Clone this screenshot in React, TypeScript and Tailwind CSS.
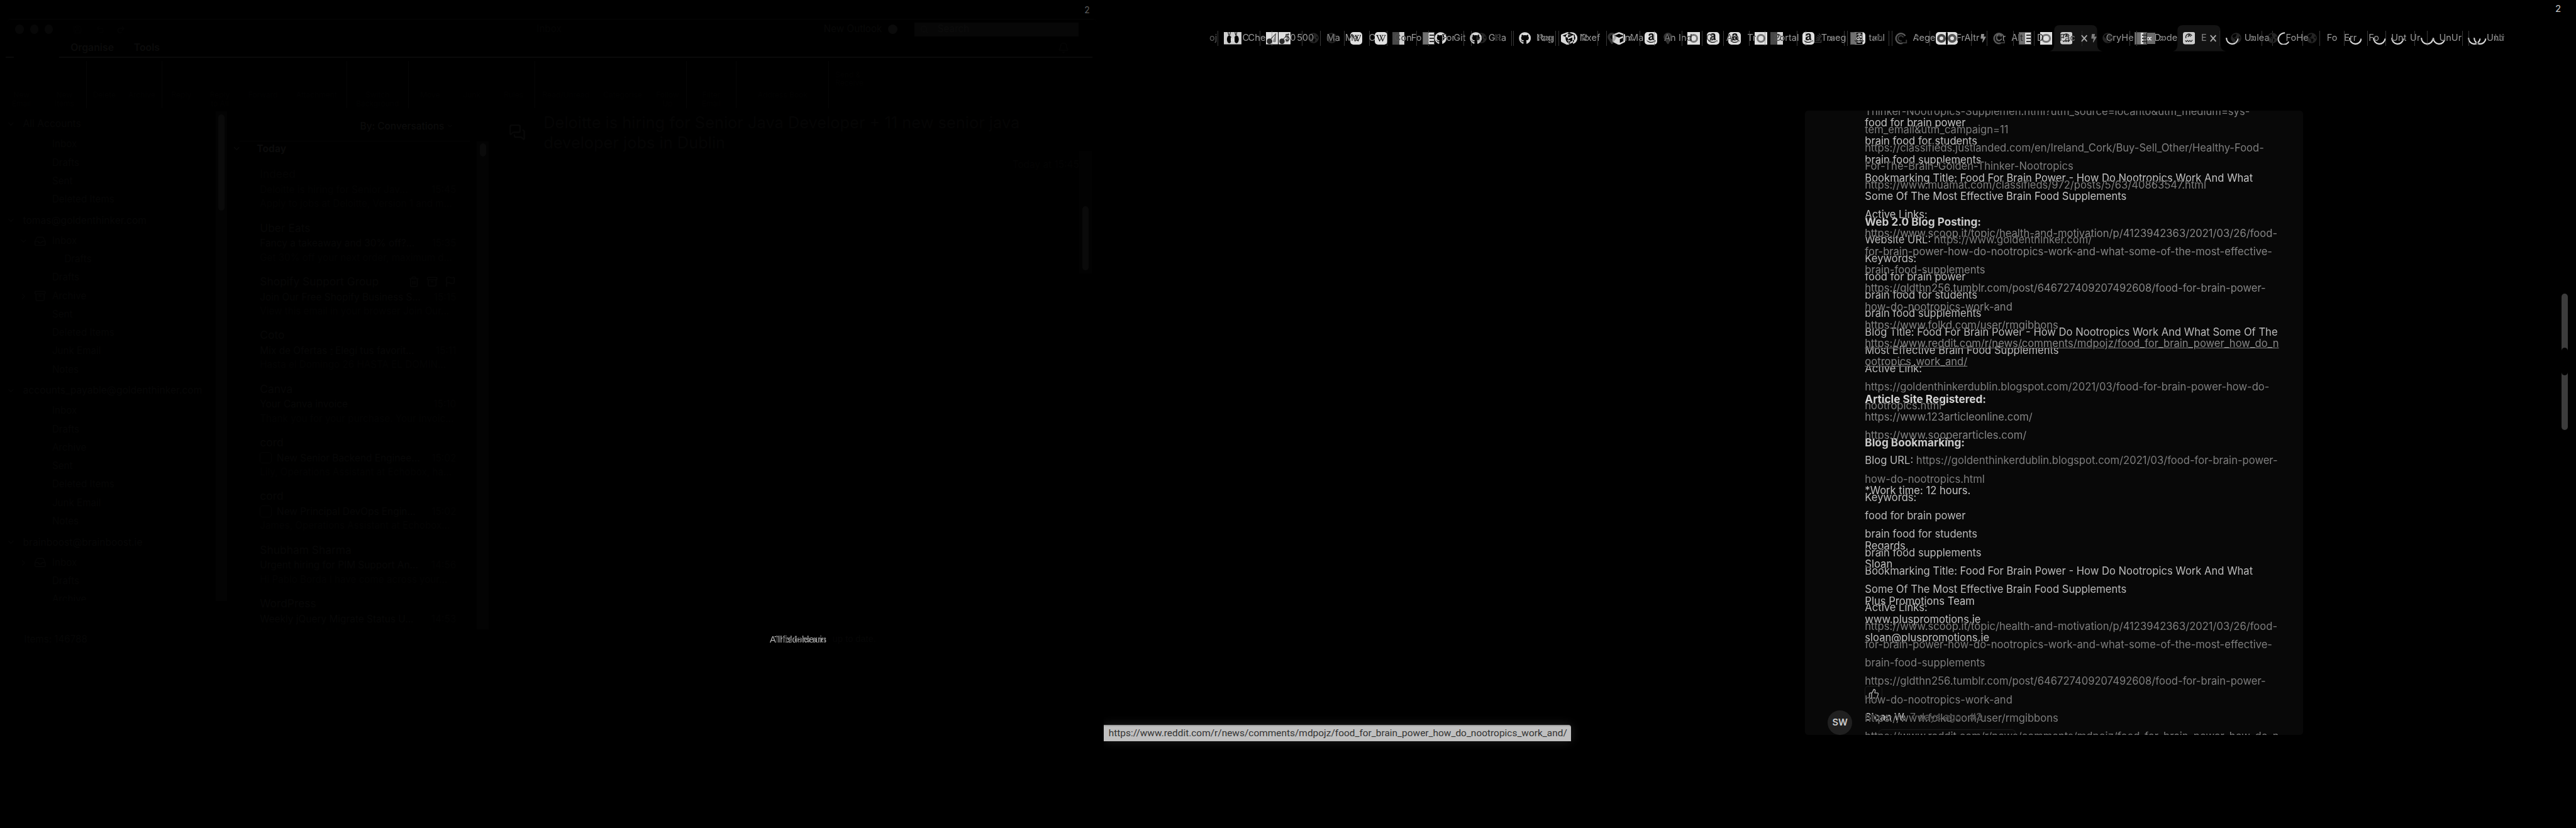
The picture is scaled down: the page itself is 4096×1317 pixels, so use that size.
import React from "react";
import { Archive, Bell, ChevronDown, ChevronRight, Flag, Inbox, MessagesSquare, Redo2, Save, Search, ThumbsUp, Trash2, Undo2 } from "lucide-react";
import { FaAmazon, FaBolt, FaCube, FaGithub, FaGlobeAmericas, FaMapMarkerAlt, FaStackOverflow, FaWikipediaW } from "react-icons/fa";

/* ---------- mail window ---------- */

type Folder = { label: string; kind?: "head" | "indent"; icon?: "inbox" | "archive"; open?: boolean };

const folders: Folder[] = [
  { label: "All Accounts", kind: "head" },
  { label: "Inbox" },
  { label: "Drafts" },
  { label: "Sent" },
  { label: "Deleted Items" },
  { label: "tomas@goldenthinker.com", kind: "head" },
  { label: "Inbox", icon: "inbox", open: true },
  { label: "Drafts", kind: "indent" },
  { label: "Drafts" },
  { label: "Archive", icon: "archive" },
  { label: "Sent" },
  { label: "Deleted Items" },
  { label: "Junk Email" },
  { label: "Notes" },
  { label: "accounts_payable@goldenthinker.com", kind: "head" },
  { label: "Inbox" },
  { label: "Drafts" },
  { label: "Archive" },
  { label: "Sent" },
  { label: "Deleted Items" },
  { label: "Junk Email" },
  { label: "Notes" },
  { label: "brainboost@brainboost.ie", kind: "head" },
  { label: "Inbox", icon: "inbox" },
  { label: "Drafts" },
  { label: "Archive" },
];

const messages = [
  { from: "Indeed", subject: "Deloitte is hiring for Senior Jav...", time: "15:45", preview: "Apply to jobs at Deloitte, Version 1 and m...", faint: true },
  { from: "Uber Eats", subject: "Fancy a takeaway and 30% off?...", time: "15:35", preview: "Get 30% off your next order, maximum d..." },
  { from: "Shopify Support Group", subject: "Join Our Free Shopify Business S...", time: "15:15", preview: "View this email in your browser Join Our...", tools: true },
  { from: "Coto", subject: "Mix de Ofertas 🕯 Elegí tus favorit...", time: "15:11", preview: "Hasta el Domingo 26 HASTA EL DOMIN..." },
  { from: "Canva", subject: "Your Canva invoice", time: "15:10", preview: "Thank you for your purchase. Your invoic..." },
  { from: "cord", subject: "New Senior Backend Enginee...", time: "15:02", preview: "Lily, Operations Assistant at Echobox, ha...", cord: true },
  { from: "cord", subject: "New Principal DevOps Engin...", time: "15:02", preview: "James, Operations Assistant at Echobox...", cord: true },
  { from: "Shubham Sharma", subject: "Urgent hiring for PIM Support An...", time: "14:56", preview: "Hi Pablo Borda I have come across your..." },
  { from: "WordPress", subject: "Weekly jQuery Migrate Status U...", time: "14:53", preview: "Howdy, readthis is a weekly update of..." },
];

function FolderRow({ f }: { f: Folder }) {
  if (f.kind === "head")
    return (
      <div className="flex h-60 shrink-0 items-center pl-16 text-[15.6px] text-[#070707]">
        <ChevronDown className="mr-20 size-24" />
        {f.label}
      </div>
    );
  return (
    <div className="flex h-48 shrink-0 items-center text-[15.2px] text-[#060606]">
      <div className={f.kind === "indent" ? "flex w-168 items-center pl-50" : "flex w-136 items-center pl-50"}>
        {f.icon && (f.open ? <ChevronDown className="mr-14 size-24" /> : <ChevronRight className="mr-14 size-24" />)}
        {f.icon === "inbox" && <Inbox className="size-32" />}
        {f.icon === "archive" && <Archive className="size-32" />}
      </div>
      {f.label}
    </div>
  );
}

function RibbonGroup({ className, labels }: { className: string; labels: string[] }) {
  return (
    <div className={`flex h-124 shrink-0 items-end justify-around border-r-[1px] border-[#060606] text-center text-[12px] leading-22 text-[#030303] ${className}`}>
      {labels.map((l) => (
        <div key={l} className="h-46 whitespace-pre-line">{l}</div>
      ))}
    </div>
  );
}

function MailWindow() {
  return (
    <div className="flex h-2160 w-2880 flex-col overflow-hidden">
      <div className="flex h-50 items-center justify-end pr-37 text-[14px] text-[#5c5c5c]">2</div>
      <div className="mx-18 flex h-52 items-center rounded-t-md border-t border-[#050505] text-[15.2px] text-[#080808]">
        <div className="flex w-310 gap-16 pl-22">
          <div className="size-24 rounded-full bg-[#070707]" />
          <div className="size-24 rounded-full bg-[#070707]" />
          <div className="size-24 rounded-full bg-[#070707]" />
          <Save className="ml-36 size-26 text-[#030303]" />
          <Undo2 className="ml-20 size-26 text-[#030303]" />
          <Redo2 className="ml-14 size-26 text-[#060606]" />
        </div>
        <div className="w-1821 pl-1072 text-[#050505]">Inbox</div>
        <div className="flex w-237 items-center gap-16 whitespace-nowrap">
          New Outlook
          <div className="size-24 rounded-full bg-[#0a0a0a]" />
        </div>
        <div className="flex h-36 w-427 items-center gap-24 bg-[#070707] pl-14 text-[#0c0c0c]">
          <Search className="size-22" />
          Search
        </div>
      </div>
      <div className="flex h-46 items-center pl-184 text-[15.8px] font-semibold text-[#0b0b0b]">
        <div className="w-165">Organise</div>
        <div className="grow">Tools</div>
        <Bell className="mr-90 size-30 text-[#050505]" />
      </div>
      <div className="flex h-3 gap-118 pl-14">
        <div className="w-22 bg-[#0a0a0a]" />
        <div className="mr-30 grow bg-[#0a0a0a]" />
      </div>
      <div className="flex h-140 items-center">
        <RibbonGroup className="w-226" labels={["New\nEmail", "New\nItems"]} />
        <RibbonGroup className="w-197" labels={["Delete", "Archive"]} />
        <RibbonGroup className="w-482" labels={["Reply", "Reply\nto All", "Forward", "Attachment"]} />
        <RibbonGroup className="w-161" labels={["Switch\nBackground"]} />
        <RibbonGroup className="w-331" labels={["Move", "Junk", "Rules"]} />
        <RibbonGroup className="w-394" labels={["Read/Unread", "Categorise", "Follow\nUp"]} />
        <RibbonGroup className="w-131" labels={["Filter\nEmail"]} />
        <RibbonGroup className="w-241" labels={["Address Book"]} />
        <div className="h-76 pl-16 text-[12px] leading-22 text-[#030303]">Send &amp;<br />Receive</div>
      </div>
      <div className="flex h-1352">
        <div className="flex h-1278 w-562 shrink-0 flex-col overflow-hidden pt-2">
          {folders.map((f, i) => <FolderRow key={i} f={f} />)}
        </div>
        <div className="h-1278 w-30 shrink-0 bg-[#030303] pt-7">
          <div className="mx-auto h-252 w-16 rounded-full bg-[#0a0a0a]" />
        </div>
        <div className="flex w-652 shrink-0 flex-col overflow-hidden pl-14">
          <div className="ml-19 flex h-79 w-600 shrink-0 items-center justify-end gap-6 border-b border-[#050505] pr-42 text-[15.4px] font-medium text-[#0b0b0b]">
            By: Conversations <ChevronDown className="size-18" />
          </div>
          <div className="flex h-36 shrink-0 items-center text-[15.6px] font-bold text-[#0b0b0b]">
            <ChevronDown className="mr-40 size-24" /> Today
          </div>
          {messages.map((m, i) => (
            <div key={i} className={m.faint ? "mr-54 flex h-140 w-512 shrink-0 flex-col self-end pt-28 text-[#040404]" : "mr-54 flex h-140 w-512 shrink-0 flex-col self-end pt-28 text-[#070707]"}>
              <div className="flex h-42 items-center text-[17.4px]">
                <span className="grow">{m.from}</span>
                {m.tools && <span className="flex gap-18"><Trash2 className="size-30" /><Archive className="size-30" /><Flag className="size-30" /></span>}
              </div>
              <div className="flex h-38 items-center whitespace-nowrap text-[15.4px]">
                {m.cord && <span className="mr-14 h-30 w-30 rounded-sm border border-[#050505]" />}
                <span className="grow">{m.subject}</span>
                <span className="text-[#040404]">{m.time}</span>
              </div>
              <div className="h-32 whitespace-nowrap text-[15.2px] text-[#040404]">{m.preview}</div>
            </div>
          ))}
        </div>
        <div className="mt-78 w-31 shrink-0 bg-[#030303] pt-5">
          <div className="mx-auto h-35 w-16 rounded-full bg-[#0a0a0a]" />
        </div>
        <div className="flex w-1573 shrink-0 pl-52 pt-3">
          <MessagesSquare className="mt-29 size-44 shrink-0 text-[#080808]" />
          <div className="ml-47 w-1397 shrink-0 text-[25.4px] leading-52 text-[#050505]">
            <div className="whitespace-nowrap">Deloitte is hiring for Senior Java Developer + 11 new senior java</div>
            <div>developer jobs in Dublin</div>
            <div className="mt-8 text-right text-[15.4px] leading-48 text-[#040404]">Today at 15:45</div>
          </div>
          <div className="mt-100 h-320 w-33 shrink-0 bg-[#020202] pt-144">
            <div className="mx-auto h-167 w-16 rounded-full bg-[#0a0a0a]" />
          </div>
        </div>
      </div>
      <div className="flex h-52 items-center whitespace-nowrap pl-63 text-[15.2px] text-[#060606]">
        <div className="w-1945">Items: 146788</div>
        <div className="relative isolate h-48 w-154 overflow-hidden font-['Liberation_Sans'] text-[14.6px] leading-48 text-[#b4b4b4]">
          <div>All folders are up to date.</div>
          <div className="absolute left-12 top-0 mix-blend-difference">This folder is up to date.</div>
        </div>
        <div className="pl-10 font-['Liberation_Sans'] text-[14.6px] text-[#060606]">up to date.</div>
      </div>
    </div>
  );
}

/* ---------- browser tab strip ---------- */

type Kind =
  | "sep" | "txt" | "dim" | "butterfly" | "cherry" | "globe" | "wiki" | "half" | "sheet" | "github"
  | "cube" | "amazon" | "pin" | "ring" | "stack" | "swirl" | "rings" | "bolt" | "tab" | "photo"
  | "alpha" | "arc" | "arcLeft" | "close";

const strip: [Kind, number, string?][] = [
  ["tab", 5346], ["tab", 5668],
  ["dim", 3155, "oj"], ["sep", 3177], ["butterfly", 3192], ["txt", 3241, "C"], ["txt", 3256, "Che"], ["sep", 3287],
  ["cherry", 3302], ["sep", 3318], ["cherry", 3335], ["txt", 3351, "50"], ["txt", 3383, "500"], ["sep", 3396],
  ["globe", 3412], ["sep", 3444], ["globe", 3460], ["txt", 3461, "Ma"], ["sep", 3506], ["txt", 3509, "Ma"], ["wiki", 3522],
  ["sep", 3571], ["txt", 3571, "C"], ["wiki", 3587], ["sep", 3617], ["half", 3632], ["txt", 3637, "Con"], ["txt", 3681, "Fo"],
  ["sep", 3694], ["sheet", 3711], ["sep", 3726], ["github", 3742], ["txt", 3760, "For"], ["txt", 3792, "Git"], ["sep", 3818],
  ["globe", 3850], ["github", 3834], ["sep", 3837], ["txt", 3883, "GRa"], ["txt", 3900, "R"], ["sep", 3943], ["sep", 3948],
  ["github", 3962], ["txt", 4008, "Pag"], ["txt", 4011, "Reg"], ["sep", 4057], ["sep", 4066], ["cube", 4072], ["github", 4083],
  ["txt", 4121, "Nxef"], ["txt", 4126, "R"], ["sep", 4167], ["sep", 4190], ["pin", 4190], ["cube", 4206], ["txt", 4232, "InMa"], ["txt", 4249, "o"],
  ["sep", 4277], ["amazon", 4291], ["sep", 4315], ["pin", 4336], ["txt", 4341, "An"], ["sep", 4387], ["txt", 4379, "Ind"],
  ["ring", 4402], ["sep", 4439], ["amazon", 4453], ["txt", 4451, "G"], ["sep", 4495], ["txt", 4503, "A"], ["amazon", 4509], ["txt", 4516, "m"],
  ["txt", 4558, "Tr"], ["sep", 4563], ["ring", 4578], ["sep", 4603], ["half", 4619], ["txt", 4627, "Portal"], ["txt", 4629, "C"],
  ["sep", 4687], ["sep", 4711], ["amazon", 4702], ["stack", 4729], ["txt", 4751, "Traeg"], ["txt", 4770, "x"], ["sep", 4811], ["sep", 4819],
  ["sheet", 4827], ["amazon", 4834], ["txt", 4875, "tabl"], ["txt", 4884, "ch"], ["sep", 4926], ["sep", 4935], ["swirl", 4944],
  ["txt", 4990, "Aege"], ["txt", 4998, "t"], ["sep", 5034], ["rings", 5050], ["txt", 5103, "FrAltr"], ["sep", 5142], ["bolt", 5165],
  ["sep", 5183], ["swirl", 5199], ["txt", 5206, "Cr"], ["txt", 5247, "Alt"], ["sep", 5251], ["sheet", 5267], ["sep", 5306],
  ["txt", 5314, "D"], ["ring", 5322], ["photo", 5374], ["txt", 5373, "Fac"], ["sep", 5431], ["close", 5427], ["bolt", 5453],
  ["globe", 5485], ["txt", 5494, "CryHe"], ["sep", 5555], ["sep", 5574], ["sheet", 5569], ["alpha", 5592], ["txt", 5620, "Dode"], ["txt", 5634, "x"],
  ["photo", 5694], ["txt", 5742, "E"], ["close", 5763], ["sep", 5790], ["arc", 5806], ["globe", 5820], ["txt", 5855, "Unlea"], ["txt", 5870, "x"],
  ["sep", 5899], ["globe", 5915], ["sep", 5927], ["arcLeft", 5941], ["txt", 5963, "FoHe"], ["globe", 6016], ["sep", 6007], ["sep", 6050],
  ["txt", 6070, "Fo"], ["sep", 6114], ["txt", 6115, "Err"], ["arc", 6127], ["sep", 6175], ["txt", 6179, "Fo"], ["arc", 6190],
  ["sep", 6223], ["arc", 6238], ["txt", 6238, "Unt"], ["txt", 6287, "Ur"], ["sep", 6299], ["arc", 6314], ["sep", 6332], ["arc", 6346],
  ["txt", 6363, "UnUr"], ["sep", 6423], ["sep", 6439], ["arc", 6438], ["arc", 6453], ["txt", 6487, "Unti"], ["dim", 6507, "Ur"],
];

function Glyph({ kind, text }: { kind: Kind; text?: string }) {
  switch (kind) {
    case "sep":
      return <div className="h-40 w-[1px] bg-[#383838]" />;
    case "txt":
      return <span className="text-[14.6px] text-[#989898]">{text}</span>;
    case "dim":
      return <span className="text-[14.6px] text-[#5c5c5c]">{text}</span>;
    case "close":
      return (
        <svg viewBox="0 0 20 20" className="size-20">
          <path d="M3 2L17 18M17 2L3 18" stroke="#c0c0c0" strokeWidth="3" />
        </svg>
      );
    case "github":
      return <FaGithub className="size-32 text-[#d8d8d8]" />;
    case "globe":
      return <FaGlobeAmericas className="size-28 text-[#242424]" />;
    case "bolt":
      return <FaBolt className="h-22 w-18 text-[#909090]" />;
    case "cube":
      return <FaCube className="size-34 text-[#d8d8d8]" />;
    case "pin":
      return <FaMapMarkerAlt className="size-30 text-[#333333]" />;
    case "stack":
      return <FaStackOverflow className="size-28 text-[#3a3a3a]" />;
    case "wiki":
      return <div className="flex size-32 items-center justify-center rounded-[5px] bg-[#e0e0e0] text-black"><FaWikipediaW className="size-26" /></div>;
    case "amazon":
      return <div className="flex size-32 items-center justify-center rounded-[5px] bg-[#e0e0e0] text-[#111111]"><FaAmazon className="size-28" /></div>;
    case "ring":
      return <div className="flex size-32 items-center justify-center bg-[#e0e0e0]"><div className="size-24 rounded-full border-[3px] border-[#777777]" /></div>;
    case "rings":
      return (
        <div className="flex h-32 w-57 items-center justify-center rounded-[5px] bg-[#e0e0e0]">
          <div className="size-24 rounded-full border-[4px] border-[#444444]" />
          <div className="h-32 w-4 rounded-full bg-black" />
          <div className="size-24 rounded-full border-[4px] border-[#555555]" />
        </div>
      );
    case "half":
      return <div className="flex size-32 bg-[#474747]"><div className="ml-auto h-full w-14 bg-[#d0d0d0]" /></div>;
    case "sheet":
      return (
        <div className="flex size-32 border border-[#555555] bg-[#707070]">
          <div className="ml-auto flex h-full w-15 flex-col justify-evenly bg-[#d8d8d8] pl-3">
            <div className="h-3 bg-[#333333]" /><div className="h-3 bg-[#333333]" /><div className="h-3 bg-[#333333]" />
          </div>
        </div>
      );
    case "alpha":
      return <div className="flex size-30 items-center justify-center bg-[#6a6a6a] text-[15px] text-white">∝</div>;
    case "photo":
      return (
        <svg viewBox="0 0 32 32" className="size-32">
          <rect width="32" height="32" rx="6" fill="#e0e0e0" />
          <path d="M6 22l3 3 3-3 3 3 3-3 3 3 4-4" stroke="#333" strokeWidth="2" fill="none" />
          <path d="M8 16a8 8 0 0 1 15-6M13 13l3-6 4 5" stroke="#333" strokeWidth="2.4" fill="none" />
        </svg>
      );
    case "butterfly":
      return (
        <svg viewBox="0 0 47 32" className="h-32 w-47">
          <rect width="47" height="32" fill="#cfcfcf" />
          <path d="M11 0l2 9M17 0l-2 9M29 0l2 9M34 0l-2 9" stroke="#222" strokeWidth="2" />
          <ellipse cx="14" cy="19" rx="6" ry="10" fill="#000" />
          <ellipse cx="33" cy="19" rx="6" ry="10" fill="#000" />
          <path d="M18 14l5 4 5-4v12l-5-5-5 5z" fill="#ddd" />
        </svg>
      );
    case "cherry":
      return (
        <svg viewBox="0 0 32 32" className="size-32">
          <rect width="32" height="32" fill="#e0e0e0" />
          <path d="M9 22L26 4l-6 20" stroke="#555" strokeWidth="2" fill="none" />
          <circle cx="9" cy="24" r="7" fill="#2a2a2a" />
          <path d="M20 18l6-13v20a6 6 0 0 1-8 0z" fill="#888" />
        </svg>
      );
    case "swirl":
      return (
        <svg viewBox="0 0 32 32" className="size-32" fill="none">
          <path d="M27 10A13 13 0 1 0 20 29" stroke="#5a5a5a" strokeWidth="4" />
          <path d="M22 14a7 7 0 1 0-4 9M16 28h14v-8" stroke="#3c3c3c" strokeWidth="3" />
        </svg>
      );
    case "arc":
      return (
        <svg viewBox="0 0 34 34" className="size-34" fill="none">
          <path d="M2 15a15 15 0 0 0 30 2" stroke="#d8d8d8" strokeWidth="3.4" />
        </svg>
      );
    case "arcLeft":
      return (
        <svg viewBox="0 0 34 34" className="size-34" fill="none">
          <path d="M20 2C5 3-1 17 5 26s20 8 25-1" stroke="#d8d8d8" strokeWidth="3.4" />
        </svg>
      );
    case "tab":
      return (
        <svg viewBox="0 0 140 68" className="h-68 w-140">
          <path d="M0 68Q12 66 12 50V14Q12 0 26 0H110Q124 0 124 14V50Q124 66 138 68Z" fill="#131313" />
        </svg>
      );
    default:
      return null;
  }
}

function TabStrip() {
  return (
    <div className="relative isolate h-68">
      {strip.map(([kind, x, text], i) => (
        <div
          key={i}
          className="absolute top-0 flex h-68 items-center whitespace-nowrap mix-blend-difference"
          style={{ left: `calc(var(--spacing) * ${x - 2880})` }}
        >
          <Glyph kind={kind} text={text} />
        </div>
      ))}
    </div>
  );
}

/* ---------- conversation panel ---------- */

type Line = { t?: string; url?: string; b?: boolean; u?: boolean };

const scoop: Line[] = [
  { url: "https://www.scoop.it/topic/health-and-motivation/p/4123942363/2021/03/26/food-" },
  { url: "for-brain-power-how-do-nootropics-work-and-what-some-of-the-most-effective-" },
  { url: "brain-food-supplements" },
  { url: "https://gldthn256.tumblr.com/post/646727409207492608/food-for-brain-power-" },
  { url: "how-do-nootropics-work-and" },
  { url: "https://www.folkd.com/user/rmgibbons" },
];

const keywords: Line[] = [
  { t: "food for brain power" },
  { t: "brain food for students" },
  { t: "brain food supplements" },
];

const bookmarking: Line[] = [
  { t: "Bookmarking Title: Food For Brain Power - How Do Nootropics Work And What" },
  { t: "Some Of The Most Effective Brain Food Supplements" },
  { t: "Active Links:" },
];

const upper: Line[] = [
  ...keywords,
  ...bookmarking,
  ...scoop,
  { url: "https://www.reddit.com/r/news/comments/mdpojz/food_for_brain_power_how_do_n", u: true },
  { url: "ootropics_work_and/", u: true },
  {},
  { t: "Article Site Registered:", b: true },
  { url: "https://www.123articleonline.com/" },
  { url: "https://www.sooperarticles.com/" },
  {},
  {},
  { t: "*Work time: 12 hours." },
  {},
  {},
  { t: "Regards," },
  { t: "Sloan" },
  {},
  { t: "Plus Promotions Team" },
  { t: "www.pluspromotions.ie" },
  { t: "sloan@pluspromotions.ie" },
];

const lower: Line[] = [
  { url: "Thinker-Nootropics-Supplemen.html?utm_source=locanto&utm_medium=sys-" },
  { url: "tem_email&utm_campaign=11" },
  { url: "https://classifieds.justlanded.com/en/Ireland_Cork/Buy-Sell_Other/Healthy-Food-" },
  { url: "For-The-Brain-Golden-Thinker-Nootropics" },
  { url: "https://www.muamat.com/classifieds/972/posts/5/63/40863547.html" },
  {},
  { t: "Web 2.0 Blog Posting:", b: true },
  { t: "Website URL: ", url: "https://www.goldenthinker.com/" },
  { t: "Keywords:" },
  ...keywords,
  { t: "Blog Title: Food For Brain Power - How Do Nootropics Work And What Some Of The" },
  { t: "Most Effective Brain Food Supplements" },
  { t: "Active Link:" },
  { url: "https://goldenthinkerdublin.blogspot.com/2021/03/food-for-brain-power-how-do-" },
  { url: "nootropics.html" },
  {},
  { t: "Blog Bookmarking:", b: true },
  { t: "Blog URL: ", url: "https://goldenthinkerdublin.blogspot.com/2021/03/food-for-brain-power-" },
  { url: "how-do-nootropics.html" },
  { t: "Keywords:" },
  ...keywords,
  ...bookmarking,
  ...scoop,
  { url: "https://www.reddit.com/r/news/comments/mdpojz/food_for_brain_power_how_do_n" },
];

function Lines({ lines }: { lines: Line[] }) {
  return (
    <>
      {lines.map((l, i) => (
        <div key={i} className="h-48 whitespace-pre">
          {l.t && <span className={l.b ? "text-[17.2px] font-bold text-[#d2d2d2]" : "text-[#c2c2c2]"}>{l.t}</span>}
          {l.url && <span className={l.u ? "text-[#868686] underline" : "text-[#868686]"}>{l.url}</span>}
        </div>
      ))}
    </>
  );
}

function Conversation() {
  return (
    <div className="relative isolate h-1630 w-1300 overflow-hidden rounded-[5px] bg-[#080808] text-[16.6px] leading-48">
      <div className="flex flex-col pl-157 pt-9">
        <Lines lines={upper} />
        <div className="mt-102 flex h-40 w-46 items-center justify-center rounded-[5px] border border-[#1c1c1c]">
          <ThumbsUp className="size-28 text-[#aaaaaa]" />
        </div>
        <div className="mt-16 flex h-56 gap-10 text-[15.8px]">
          <span className="font-medium text-[#bebebe]">Sloan W.</span>
          <span className="text-[#686868]">7 days ago · #3</span>
        </div>
        <div className="ml-36 h-40 w-358 rounded-[6px] border border-[#1a1a1a]" />
      </div>
      <div className="absolute -top-21 left-157 mix-blend-difference">
        <Lines lines={lower} />
      </div>
      <div className="absolute bottom-0 left-60 flex size-64 items-center justify-center rounded-full bg-[#202020] text-[14.6px] font-semibold text-[#cccccc]">SW</div>
    </div>
  );
}

function BrowserWindow() {
  return (
    <div className="flex h-2160 w-3840 flex-col overflow-hidden">
      <div className="flex h-66 justify-end pr-39 pt-6 text-[15px] leading-32 text-[#c8c8c8]">2</div>
      <TabStrip />
      <div className="mt-154 flex h-1630">
        <div className="relative w-1828">
          <div className="absolute left-0 top-1604 flex h-42 w-1218 items-center whitespace-nowrap rounded-tr-[4px] border-t-2 border-[#a0a0a0] bg-[#c0c0c0] pl-12 font-['Roboto'] text-[15.45px] text-[#333333] shadow-[0_0_16px_rgba(255,255,255,0.12)]">
            https://www.reddit.com/r/news/comments/mdpojz/food_for_brain_power_how_do_nootropics_work_and/
          </div>
        </div>
        <Conversation />
        <div className="ml-674 mt-478 flex h-356 w-16 items-center rounded-full bg-[#3c3c3c]">
          <div className="h-72 w-16 rounded-full bg-black" />
        </div>
      </div>
    </div>
  );
}

export default function App() {
  return (
    <div className="flex h-[1317px] w-[4096px] overflow-hidden bg-black font-['Inter',sans-serif] [--spacing:0.6095238px]">
      <MailWindow />
      <BrowserWindow />
    </div>
  );
}
